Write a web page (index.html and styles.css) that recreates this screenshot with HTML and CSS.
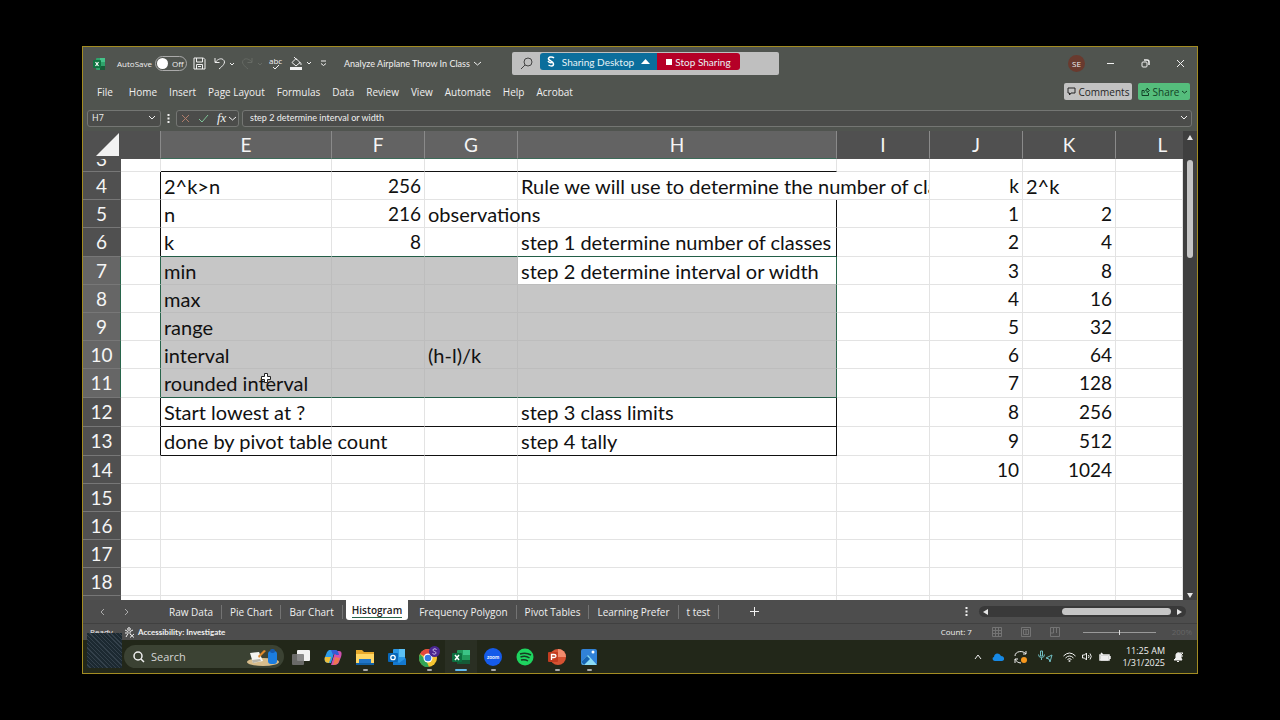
FILE: index.html
```html
<!DOCTYPE html>
<html lang="en">
<head>
<meta charset="utf-8">
<title>Analyze Airplane Throw In Class</title>
<link rel="stylesheet" href="styles.css">
</head>
<body>
<div class="desktop">
  <header class="titlebar">
    <div class="quick">
      <svg class="app-icon clear" width="12" height="12" viewBox="0 0 12 12"><rect x="3" width="9" height="12" rx="1" fill="#2fa36b"/><path d="M7 0h5v4H7z" fill="#45c38a"/><path d="M7 8h5v4H7z" fill="#175c38"/><rect y="2" width="8" height="8" rx="1" fill="#0e7541"/><path d="M2.500 4l3 4M5.500 4l-3 4" stroke="#fff" stroke-width="1.200"/></svg>
      <label class="autosave">AutoSave <span class="switch"><input type="checkbox" aria-label="AutoSave"><span>Off</span></span></label>
      <button class="icon save" aria-label="Save"><svg width="13" height="13" viewBox="0 0 13 13"><path d="M1 1h9.500L12 2.500V12H1zM3.500 1v4h6V1M3.500 12V7.500h6V12M5 9.500h3"/></svg></button>
      <button class="icon undo" aria-label="Undo"><svg width="22" height="13" viewBox="0 0 22 13"><path d="M1 1v4.500h4.500M1.500 5C4 2 7 1 9 2.500c4 3-1 7-4 9.500" /><path d="M16 6l2 2 2-2"/></svg></button>
      <button class="icon redo" aria-label="Redo"><svg width="22" height="13" viewBox="0 0 22 13"><path d="M11 1v4.500H6.500M11 5C8 2 5 1 3 2.500c-4 3 1 7 4 9.500M17 6l2 2 2-2"/></svg></button>
      <button class="icon spell" aria-label="Spelling"><span>abc</span><svg width="8" height="6" viewBox="0 0 8 6"><path d="M1 3l2 2 4-4"/></svg></button>
      <button class="icon fill" aria-label="Fill color"><svg width="22" height="13" viewBox="0 0 22 13"><path d="M2 5.500l4-4 4 4-4 3.500zM4 0l3 3M9 6c2-1 2 0 2 2"/><path d="M0 11.500h12" stroke-width="3"/><path d="M17 5l2 2 2-2"/></svg></button>
      <button class="icon more" aria-label="Customize toolbar"><svg width="7" height="7" viewBox="0 0 7 7"><path d="M1 1h5M1 3.500l2.500 2 2.500-2"/></svg></button>
    </div>
    <button class="doc-title">Analyze Airplane Throw In Class <svg width="7" height="5" viewBox="0 0 7 5"><path d="M0 1l3.500 3L7 1"/></svg></button>
    <div class="search">
      <svg width="12" height="13" viewBox="0 0 12 13"><circle cx="7" cy="5" r="4"/><path d="M4 8l-4 4"/></svg>
      <div class="sharing"><button class="share-desktop"><svg width="8" height="11" viewBox="0 0 8 11"><path d="M7 2C5 0 1 1 1.500 3s5 2 5 5-3.500 2-5 1M1 5c1 2 3 2 5 1" stroke="#fff" stroke-width="1.500"/></svg>Sharing Desktop<svg width="9" height="5" viewBox="0 0 9 5"><path d="M0 5l4.500-5L9 5z" fill="#fff" stroke="none"/></svg></button><button class="stop"><i></i>Stop Sharing</button></div>
    </div>
    <div class="window-controls">
      <button class="avatar" aria-label="Account SE">SE</button>
      <button aria-label="Minimize"><svg width="9" height="9" viewBox="0 0 9 9"><path d="M1 4.500h7"/></svg></button>
      <button aria-label="Restore"><svg width="9" height="9" viewBox="0 0 9 9"><rect x="1" y="3" width="5" height="5" rx="1"/><path d="M3 1h3q2 0 2 2v3" stroke-width="1.500"/></svg></button>
      <button aria-label="Close"><svg width="9" height="9" viewBox="0 0 9 9"><path d="M1 1l7 7M8 1L1 8"/></svg></button>
    </div>
  </header>
  <nav class="ribbon">
    <button>File</button><button>Home</button><button>Insert</button><button>Page Layout</button><button>Formulas</button><button>Data</button><button>Review</button><button>View</button><button>Automate</button><button>Help</button><button>Acrobat</button>
    <div class="ribbon-actions">
      <button class="comments"><svg width="9" height="9" viewBox="0 0 9 9"><path d="M1 1h7v5H4L2.500 8V6H1z"/></svg>Comments</button>
      <button class="share"><svg width="9" height="9" viewBox="0 0 9 9"><path d="M3 3.500H1v5h6.500V6M3 6c0-2 1-3 3-3V1l2.500 2.500L6 5.500V4"/></svg>Share<svg width="5" height="4" viewBox="0 0 5 4"><path d="M0 1l2.500 2L5 1"/></svg></button>
    </div>
  </nav>
  <div class="formula-bar">
    <div class="field name-box"><input value="H7" aria-label="Name box"><svg width="8" height="6" viewBox="0 0 8 6"><path d="M1 1l3 3 3-3"/></svg></div>
    <svg class="dots" width="3" height="9" viewBox="0 0 3 9"><path d="M.5 0h2v2h-2zM.5 3.500h2v2h-2zM.5 7h2v2h-2z"/></svg>
    <div class="field fx">
      <button aria-label="Cancel"><svg width="9" height="9" viewBox="0 0 9 9"><path d="M1 1l7 7M8 1L1 8" stroke="#b07d6a"/></svg></button>
      <button aria-label="Enter"><svg width="11" height="9" viewBox="0 0 11 9"><path d="M1 5l3 3 6-7" stroke="#7fc498"/></svg></button>
      <button aria-label="Insert function"><em>fx</em><svg width="7" height="5" viewBox="0 0 7 5"><path d="M0 1l3.500 3L7 1"/></svg></button>
    </div>
    <div class="field formula"><input value="step 2 determine interval or width" aria-label="Formula"><svg width="8" height="6" viewBox="0 0 8 6"><path d="M1 1l3 3 3-3"/></svg></div>
  </div>
  <main class="workspace">
    <div class="sheet">
      <table>
        <colgroup><col class="c-head"><col class="c-d"><col class="c-e"><col class="c-n"><col class="c-n"><col class="c-h"><col class="c-n"><col class="c-n"><col class="c-n"><col></colgroup>
        <thead><tr><th class="corner"><svg width="23" height="23" viewBox="0 0 23 23"><path d="M23 0v23H0z" fill="#f2f2f2"/></svg></th><th></th><th class="on">E</th><th class="on">F</th><th class="on">G</th><th class="on">H</th><th>I</th><th>J</th><th>K</th><th class="last">L</th></tr></thead>
        <tbody>
          <tr class="partial"><th><div>3</div></th><td></td><td class="bb"></td><td class="bb"></td><td class="bb"></td><td class="bb"></td><td></td><td></td><td></td><td></td></tr>
          <tr><th>4</th><td class="br"></td><td>2^k&gt;n</td><td class="num">256</td><td></td><td colspan="2" class="clip">Rule we will use to determine the number of classes</td><td class="num">k</td><td>2^k</td><td></td></tr>
          <tr><th>5</th><td class="br"></td><td>n</td><td class="num">216</td><td>observations</td><td class="br"></td><td></td><td class="num">1</td><td class="num">2</td><td></td></tr>
          <tr class="tall"><th>6</th><td class="br"></td><td class="bg">k</td><td class="num bg">8</td><td class="bg"></td><td class="br bg">step 1 determine number of classes</td><td></td><td class="num">2</td><td class="num">4</td><td></td></tr>
          <tr class="sel"><th>7</th><td></td><td>min</td><td></td><td></td><td class="active">step 2 determine interval or width</td><td></td><td class="num">3</td><td class="num">8</td><td></td></tr>
          <tr class="sel"><th>8</th><td></td><td>max</td><td></td><td></td><td></td><td></td><td class="num">4</td><td class="num">16</td><td></td></tr>
          <tr class="sel"><th>9</th><td></td><td>range</td><td></td><td></td><td></td><td></td><td class="num">5</td><td class="num">32</td><td></td></tr>
          <tr class="sel"><th>10</th><td></td><td>interval</td><td></td><td>(h-l)/k</td><td></td><td></td><td class="num">6</td><td class="num">64</td><td></td></tr>
          <tr class="sel tall"><th>11</th><td></td><td class="bg hover">rounded interval<svg class="cursor" width="10" height="10" viewBox="0 0 10 10"><path d="M3.500.5h3v3h3v3h-3v3h-3v-3h-3v-3h3z" fill="#fff" stroke="#222"/></svg></td><td class="bg"></td><td class="bg"></td><td class="bg"></td><td></td><td class="num">7</td><td class="num">128</td><td></td></tr>
          <tr class="tall"><th>12</th><td class="br"></td><td class="bb">Start lowest at ?</td><td class="bb"></td><td class="bb"></td><td class="bb br">step 3 class limits</td><td></td><td class="num">8</td><td class="num">256</td><td></td></tr>
          <tr class="tall"><th>13</th><td class="br"></td><td class="bb">done by pivot table count</td><td class="bb"></td><td class="bb"></td><td class="bb br">step 4 tally</td><td></td><td class="num">9</td><td class="num">512</td><td></td></tr>
          <tr><th>14</th><td></td><td></td><td></td><td></td><td></td><td></td><td class="num">10</td><td class="num">1024</td><td></td></tr>
          <tr><th>15</th><td></td><td></td><td></td><td></td><td></td><td></td><td></td><td></td><td></td></tr>
          <tr><th>16</th><td></td><td></td><td></td><td></td><td></td><td></td><td></td><td></td><td></td></tr>
          <tr><th>17</th><td></td><td></td><td></td><td></td><td></td><td></td><td></td><td></td><td></td></tr>
          <tr><th>18</th><td></td><td></td><td></td><td></td><td></td><td></td><td></td><td></td><td></td></tr>
          <tr><th></th><td></td><td></td><td></td><td></td><td></td><td></td><td></td><td></td><td></td></tr>
        </tbody>
      </table>
    </div>
    <div class="vscroll"><svg width="8" height="6" viewBox="0 0 8 6"><path d="M1 6l3-5 3 5z"/></svg><div class="track"><div class="thumb"></div></div><svg width="8" height="6" viewBox="0 0 8 6"><path d="M1 0l3 5 3-5z"/></svg></div>
  </main>
  <div class="sheetbar">
    <div class="sheet-nav"><button aria-label="Previous sheet"><svg width="5" height="8" viewBox="0 0 5 8"><path d="M4 1L1 4l3 3"/></svg></button><button aria-label="Next sheet"><svg width="5" height="8" viewBox="0 0 5 8"><path d="M1 1l3 3-3 3"/></svg></button></div>
    <div class="tabs"><button>Raw Data</button><button>Pie Chart</button><button>Bar Chart</button><button class="current"><span>Histogram</span></button><button>Frequency Polygon</button><button>Pivot Tables</button><button>Learning Prefer</button><button>t test</button></div>
    <button class="add" aria-label="New sheet"><svg width="9" height="9" viewBox="0 0 9 9"><path d="M4.500 0v9M0 4.500h9"/></svg></button>
    <svg class="dots push" width="3" height="9" viewBox="0 0 3 9"><path d="M.5 0h2v2h-2zM.5 3.500h2v2h-2zM.5 7h2v2h-2z"/></svg>
    <div class="hscroll"><svg width="5" height="8" viewBox="0 0 5 8"><path d="M5 1L0 4l5 3z"/></svg><div class="thumb"></div><svg width="5" height="8" viewBox="0 0 5 8"><path d="M0 1l5 3-5 3z"/></svg></div>
  </div>
  <div class="status">
    <span class="ready">Ready</span>
    <button class="access"><svg width="11" height="11" viewBox="0 0 11 11"><circle cx="5" cy="2" r="1.300"/><path d="M1 3l3 1.500v2L2 10M9 3L6 4.500v2L7 8M6 7l4 3.500M10 7l-4 3.500M1 6h2"/></svg>Accessibility: Investigate</button>
    <span class="count">Count: 7</span>
    <div class="views">
      <button aria-label="Normal view"><svg width="10" height="10" viewBox="0 0 10 10"><path d="M.5.500h9v9h-9zM.5 3.500h9M.5 6.500h9M3.500.500v9M6.500.500v9"/></svg></button>
      <button aria-label="Page layout view"><svg width="10" height="10" viewBox="0 0 10 10"><path d="M.5.500h9v9h-9zM2.500 2.500h5v5h-5zM4 4h2M4 6h2"/></svg></button>
      <button aria-label="Page break view"><svg width="10" height="10" viewBox="0 0 10 10"><path d="M.5.500h9v9h-9zM3.500 0v6h-3M6.500 0v6"/></svg></button>
    </div>
    <input class="zoom" type="range" aria-label="Zoom">
    <span class="percent">200%</span>
  </div>
  <footer class="taskbar">
    <button class="start" aria-label="Start"></button>
    <label class="task-search"><svg width="12" height="12" viewBox="0 0 12 12"><circle cx="5" cy="5" r="4" stroke-width="1.500"/><path d="M8 8l3 3" stroke-width="1.500"/></svg><input placeholder="Search" aria-label="Search"><svg class="clear" width="34" height="18" viewBox="0 0 34 18"><ellipse cx="17" cy="14" rx="16" ry="4" fill="#d8bd8c"/><path d="M4 5l9-1 4 9-10 2z" fill="#f5f5f0"/><path d="M12 8l6-6 2 1-7 7z" fill="#e08a2c"/><rect x="22" y="3" width="9" height="13" rx="3" fill="#1b7de0"/><rect x="24" y="1" width="5" height="4" rx="2" fill="#1559ad"/><path d="M6 12l8-1 1 2-8 2z" fill="#b8b5a8"/></svg></label>
    <div class="apps">
      <button aria-label="Task view"><svg width="18" height="18" viewBox="0 0 18 18"><rect x="5" y="2" width="13" height="11" rx="1" fill="#f2f2f2"/><rect x="0" y="6" width="12" height="11" rx="1" fill="#777" fill-opacity=".85"/></svg></button>
      <button aria-label="Copilot"><svg width="18" height="18" viewBox="0 0 18 18"><path d="M5 2h6l-4 13H4C1 15 0 12 1 9l2-5z" fill="#2d9be8"/><path d="M1 9l6 0-2 6C1 15 0 12 1 9z" fill="#edbe38"/><path d="M13 3h2c3 0 3 3 2 6l-2 5c-1 3-4 3-8 3l4-13z" fill="#cf50b0"/><path d="M11 9l5 1-2 5q-2 2-5 2z" fill="#ee7650"/><path d="M7 2h5q2 0 3 5h-3q-1-2-3 0z" fill="#345bd4"/></svg></button>
      <button class="open" aria-label="File Explorer"><svg width="18" height="18" viewBox="0 0 18 18"><path d="M0 2h6l2 2h10v12H0z" fill="#e7a92c"/><path d="M0 6h18v10H0z" fill="#ffd765"/><path d="M3 11h12v5H3z" fill="#2175c7"/><path d="M0 15h18v2H0z" fill="#1261a6"/></svg></button>
      <button aria-label="Outlook"><svg width="18" height="18" viewBox="0 0 18 18"><rect x="5" y="1" width="12" height="16" rx="1" fill="#2996e5"/><path d="M11 1h6v8h-6z" fill="#5bc0f4"/><path d="M5 11l6 4 7-5v7H5z" fill="#1479cf"/><rect y="5" width="10" height="9" rx="1" fill="#0867b8"/><circle cx="5" cy="9.500" r="2.200" fill="none" stroke="#fff" stroke-width="1.300"/></svg></button>
      <button class="open" aria-label="Chrome"><svg width="22" height="22" viewBox="0 0 22 22"><circle cx="10" cy="12" r="9" fill="#f4c431"/><path d="M10 12L2 8a9 9 0 0116 0z" fill="#e3483c"/><path d="M2 8l6 6 3 7A9 9 0 012 8z" fill="#32a456"/><circle cx="10" cy="12" r="4.500" fill="#fff"/><circle cx="10" cy="12" r="3.300" fill="#3479e5"/><circle cx="16.500" cy="5.500" r="5.500" fill="#4a2691"/><path d="M18.500 3.500c-3-2-5 1-2 2s1 4-2 2" fill="none" stroke="#d4c5ef"/></svg></button>
      <button class="open selected" aria-label="Excel"><svg width="18" height="18" viewBox="0 0 18 18"><rect x="5" y="2" width="13" height="14" rx="1" fill="#219a5b"/><path d="M11 2h7v5h-7z" fill="#3bc486"/><path d="M5 12h13v4H5z" fill="#155b37"/><rect y="5" width="10" height="9" rx="1" fill="#0c7040"/><path d="M3 7l4 5M7 7l-4 5" stroke="#fff" stroke-width="1.500"/></svg></button>
      <button class="open" aria-label="Zoom"><svg width="18" height="18" viewBox="0 0 18 18"><circle cx="9" cy="9" r="9" fill="#155bea"/><text x="9" y="11" text-anchor="middle" class="zoom-word">zoom</text></svg></button>
      <button aria-label="Spotify"><svg width="18" height="18" viewBox="0 0 18 18"><circle cx="9" cy="9" r="8.500" fill="#1ed45f"/><path d="M4 6q6-2 11 1M4.500 9q5-2 9 1M5 12q4-1 7 1" fill="none" stroke="#173b22" stroke-width="1.500"/></svg></button>
      <button class="open" aria-label="PowerPoint"><svg width="18" height="18" viewBox="0 0 18 18"><circle cx="10" cy="9" r="8" fill="#d65232"/><path d="M10 1a8 8 0 018 8h-8z" fill="#f28b6d"/><rect y="4" width="10" height="10" rx="1" fill="#c33c20"/><path d="M3.500 12V6.500H6q2 0 2 1.500T6 9.500H3.500" fill="none" stroke="#fff" stroke-width="1.300"/></svg></button>
      <button class="open" aria-label="Photos"><svg width="18" height="18" viewBox="0 0 18 18"><rect x="1" y="1" width="16" height="16" rx="2" fill="#3182d8"/><path d="M1 14l7-7 9 10H3z" fill="#8bdcf6"/><path d="M1 14l6-6 3 3-6 6z" fill="#1764b2"/><circle cx="13" cy="4" r="1.500" fill="#fff"/></svg></button>
    </div>
    <div class="tray">
      <button aria-label="Hidden icons"><svg width="8" height="6" viewBox="0 0 8 6"><path d="M1 5l3-4 3 4"/></svg></button>
      <button aria-label="OneDrive"><svg class="clear" width="12" height="8" viewBox="0 0 12 8"><path d="M3 8C0 8 0 4 2 4c0-4 5-5 7-1 4 0 4 5 1 5z" fill="#1689e5"/></svg></button>
      <button aria-label="Sync"><svg width="14" height="14" viewBox="0 0 14 14"><path d="M1 6c0-5 8-6 11-2V1M12 4H9M1 9c1 2 3 4 6 4M1 13V9h3"/><circle cx="10" cy="10" r="3" fill="#f7981d" stroke="none"/></svg></button>
      <button aria-label="Microphone and location"><svg width="15" height="13" viewBox="0 0 15 13" class="cyan"><path d="M2.500 1h2v5h-2zM.5 4.500q0 3 3 3t3-3M3.500 8v2M14 5L8 8l3 1 1 3z"/></svg></button>
      <button aria-label="Wi-Fi"><svg width="13" height="10" viewBox="0 0 13 10"><path d="M.5 4Q6.500-2 12.500 4M2.500 6q4-4 8 0M4.500 7.500q2-2 4 0"/><circle cx="6.500" cy="9" r=".7"/></svg></button>
      <button aria-label="Volume"><svg width="11" height="9" viewBox="0 0 11 9"><path d="M.5 3h2l2-2v7l-2-2h-2zM6.500 3q1 1.500 0 3M8 1.500q2.500 3 0 6"/></svg></button>
      <button aria-label="Battery"><svg width="12" height="9" viewBox="0 0 12 9"><path d="M1 3h9v5H1zM11 4v3M2 1l2 2" stroke-width="1.500"/><path d="M2 4h7v4H2z" fill="#eee"/></svg></button>
      <div class="clock"><span>11:25 AM</span><span>1/31/2025</span></div>
      <button aria-label="Notifications"><svg width="11" height="11" viewBox="0 0 11 11"><path d="M1 9h8L8 7V4C8 1 3 1 3 4v3z" fill="#eee"/><path d="M4 10.500h2M7 2h3L7 5h3"/></svg></button>
    </div>
  </footer>
</div>
</body>
</html>
```
FILE: styles.css
```css
* { box-sizing: border-box; }
body { margin: 0; padding: 46px 82px; background: #000; color: #f0f0f0; font: 10px/14px "Open Sans", "Noto Sans", sans-serif; }
button, input { font: inherit; color: inherit; background: none; border: 0; padding: 0; margin: 0; min-width: 0; }
button { display: flex; align-items: center; justify-content: center; white-space: nowrap; }
svg { display: block; flex: none; fill: none; stroke: currentColor; }
svg.clear { stroke: none; }
.desktop { height: calc(100vh - 92px); min-height: 500px; display: flex; flex-direction: column; border: 1px solid #a38c22; background: #505050; }

.titlebar { height: 33px; flex: none; display: grid; grid-template-columns: 260px 168px 267px 1fr; align-items: center; background: #50544f; padding-left: 1px; }
.quick { display: flex; align-items: center; padding-left: 9px; }
.autosave { display: flex; align-items: center; gap: 3px; margin-left: 12px; font-size: 8px; }
.switch { display: flex; align-items: center; width: 32px; height: 15px; border: 1px solid #aaa; border-radius: 8px; gap: 4px; padding-left: 1px; }
.switch input { appearance: none; width: 11px; height: 11px; border-radius: 50%; background: #fff; }
.save { margin-left: 6px; }
.undo { margin-left: 8px; }
.redo { margin-left: 5px; color: #666a64; }
.spell { flex-direction: column; margin-left: 6px; font-size: 8px; line-height: 7px; }
.fill { margin-left: 8px; }
.more { margin-left: 8px; }
.doc-title { justify-self: start; gap: 4px; font-family: Lato, sans-serif; font-size: 9px; }
.search { display: flex; align-items: flex-start; height: 23px; background: #bfbfbf; color: #444; border-radius: 2px; padding: 0 0 0 9px; gap: 7px; }
.search > svg { margin-top: 5px; }
.sharing { display: flex; height: 17px; margin-top: 1px; color: #e8f3f7; border-radius: 3px; overflow: hidden; font-family: Lato, sans-serif; }
.share-desktop { width: 117px; background: #0b6e9c; gap: 7px; }
.stop { width: 83px; background: #b50027; gap: 3px; }
.stop i { width: 6px; height: 6px; background: #fff; }
.window-controls { justify-self: end; display: flex; align-items: center; gap: 26px; padding-right: 12px; }
.avatar { width: 17px; height: 17px; margin-right: -5px; border-radius: 50%; background: #693a2e; font-size: 8px; }

.ribbon { height: 25px; flex: none; display: flex; align-items: center; gap: 12px; padding: 0 7px 2px 14px; background: #50544f; }
.ribbon > button:first-child { margin-right: 4px; }
.ribbon-actions { margin-left: auto; display: flex; gap: 6px; }
.ribbon-actions button { height: 17px; border-radius: 2px; gap: 3px; color: #252525; }
.ribbon-actions .comments { width: 68px; background: #c2c2c2; }
.ribbon-actions .share { width: 52px; background: #55bd7c; color: #123f25; }

.formula-bar { height: 26px; flex: none; display: flex; align-items: center; padding: 0 5px 0 4px; background: #50544f; font-size: 9px; }
.field { display: flex; align-items: center; height: 17px; border: 1px solid #747673; border-radius: 3px; background: #4b4c4a; }
.name-box { width: 74px; padding: 0 4px; }
.name-box input { width: 56px; flex: 1; }
.dots { fill: currentColor; stroke: none; margin: 0 6px; }
.fx { width: 63px; gap: 8px; padding-left: 4px; }
.fx button { gap: 3px; }
.fx em { font: italic 13px/14px "Liberation Serif", serif; }
.formula { flex: 1; margin-left: 3px; padding: 0 3px 0 7px; font-family: Lato, sans-serif; }
.formula input { flex: 1; }

.workspace { flex: 1; min-height: 0; display: flex; }
.sheet { flex: 1; min-width: 0; overflow: hidden; background: #fff; }
table { width: 100%; table-layout: fixed; border-collapse: separate; border-spacing: 0; font: 20px/26px Lato, Carlito, sans-serif; color: #111; }
.c-head { width: 38px; }
.c-d { width: 40px; }
.c-e { width: 171px; }
.c-n { width: 93px; }
.c-h { width: 319px; }
th, td { height: 28px; padding: 0 3px; border-right: 1px solid #e3e3e3; border-bottom: 1px solid #e3e3e3; white-space: nowrap; font-weight: 400; text-align: left; }
th { background: #505050; color: #f5f5f5; text-align: center; border-color: #777; padding: 0; }
thead th { border-bottom-color: #505050; border-right-color: #8a8a8a; }
th, .num { font-size: 19px; }
thead .on { background: #636363; border-bottom-color: #3d6b59; }
.corner { border-color: #505050; }
.corner svg { margin-left: 13px; stroke: none; }
thead .last { padding-left: 26px; border-right: 0; }
tbody th { border-right-color: #505050; }
.partial th, .partial td { height: 13px; }
.partial div { height: 12px; overflow: hidden; display: flex; align-items: flex-end; justify-content: center; line-height: 24px; }
.tall > * { height: 29px; }
.num { text-align: right; }
.clip { overflow: hidden; }
.bb { border-bottom: 1px solid #111; }
.br { border-right: 1px solid #111; }
td.bg { border-bottom: 1px solid #235e48; }
.sel th { background: #666; border-right-color: #28654b; }
.sel td:nth-child(2) { border-right-color: #28654b; }
.sel td:nth-child(n+3):nth-child(-n+6) { background: #c6c6c6; border-right-color: #bdbdbd; }
.sel td:nth-child(n+3):nth-child(-n+6):not(.bg) { border-bottom-color: #bdbdbd; }
.sel td.active:nth-child(6):nth-child(6) { background: #fff; }
.sel td:nth-child(6):nth-child(6):nth-child(6) { border-right-color: #28654b; }
.hover { position: relative; }
.cursor { position: absolute; left: 100px; top: 4px; }
.vscroll { width: 14px; display: flex; flex-direction: column; align-items: center; background: #3f3f3f; padding: 3px 0 1px; }
.vscroll svg, .hscroll svg { fill: #e5e5e5; stroke: none; }
.track { flex: 1; padding-top: 20px; }
.vscroll .thumb { width: 6px; height: 98px; border-radius: 3px; background: #c6c6c6; }

.sheetbar { height: 24px; flex: none; display: flex; align-items: center; border-bottom: 1px solid #404040; background: #4d4d4d; }
.sheet-nav { display: flex; gap: 19px; padding-left: 17px; width: 78px; color: #aaa; }
.tabs { align-self: stretch; display: flex; align-items: center; }
.tabs button { height: 14px; padding: 0 8px; border-right: 1px solid #737373; }
.tabs .current { align-self: flex-start; height: 20px; margin: 0 3px; padding: 0 6px; border: 0; border-radius: 0 0 3px 3px; background: #fff; color: #202020; font-weight: 600; }
.current span { border-bottom: 1px solid #28654b; }
.add { margin-left: 31px; }
.push { margin-left: auto; margin-right: 11px; }
.hscroll { width: 207px; height: 11px; margin-right: 11px; padding: 0 4px; border-radius: 6px; background: #393939; display: flex; align-items: center; gap: 6px; }
.hscroll .thumb { width: 109px; height: 7px; margin-left: auto; border-radius: 4px; background: #c6c6c6; }
.status { height: 16px; flex: none; display: flex; align-items: center; padding: 0 5px 0 7px; font-size: 8px; background: #4d4d4d; }
.ready { width: 34px; }
.access { gap: 3px; font-family: Lato, sans-serif; font-weight: 700; }
.count { margin-left: auto; width: 51px; }
.views { display: flex; gap: 19px; color: #747474; }
.zoom { appearance: none; width: 73px; height: 10px; margin: 0 16px 0 23px; background: linear-gradient(#999, #999) center / 100% 1px no-repeat; }
.zoom::-webkit-slider-thumb { appearance: none; width: 1px; height: 5px; background: #ddd; }
.percent { color: #666; }

.taskbar { height: 33px; flex: none; position: relative; display: flex; align-items: center; padding: 0 13px 0 41px; background: #222719; }
.start { position: absolute; left: 4px; top: -7px; width: 35px; height: 35px; background: repeating-linear-gradient(45deg, #1c2931 0 2px, #34414b 2px 3px); }
.task-search { width: 160px; height: 23px; border-radius: 12px; background: #3b4233; display: flex; align-items: center; gap: 6px; padding: 0 4px 0 9px; font-size: 11px; }
.task-search input { flex: 1; width: 60px; }
.task-search input::placeholder { color: #d5d5d5; opacity: 1; }
.apps { display: flex; margin-left: 1px; }
.apps svg { stroke: none; }
.apps button { width: 32px; height: 33px; position: relative; }
.apps .open::after { content: ""; position: absolute; left: 14px; bottom: 2px; width: 5px; height: 2px; border-radius: 1px; background: #aaa; }
.apps .selected { background: #2a2f23; }
.apps .selected::after { left: 10px; width: 12px; background: #61b9ed; }
.zoom-word { font: 700 5px Lato, sans-serif; fill: #fff; }
.tray { margin-left: auto; display: flex; align-items: center; gap: 10px; }
.cyan { color: #71bfc4; }
.tray button:nth-child(n+6) { margin-left: -4px; }
.clock { display: flex; flex-direction: column; align-items: flex-end; margin-left: 1px; line-height: 12px; font-size: 9px; }
.tray .clock + button { margin-left: -2px; }
```
